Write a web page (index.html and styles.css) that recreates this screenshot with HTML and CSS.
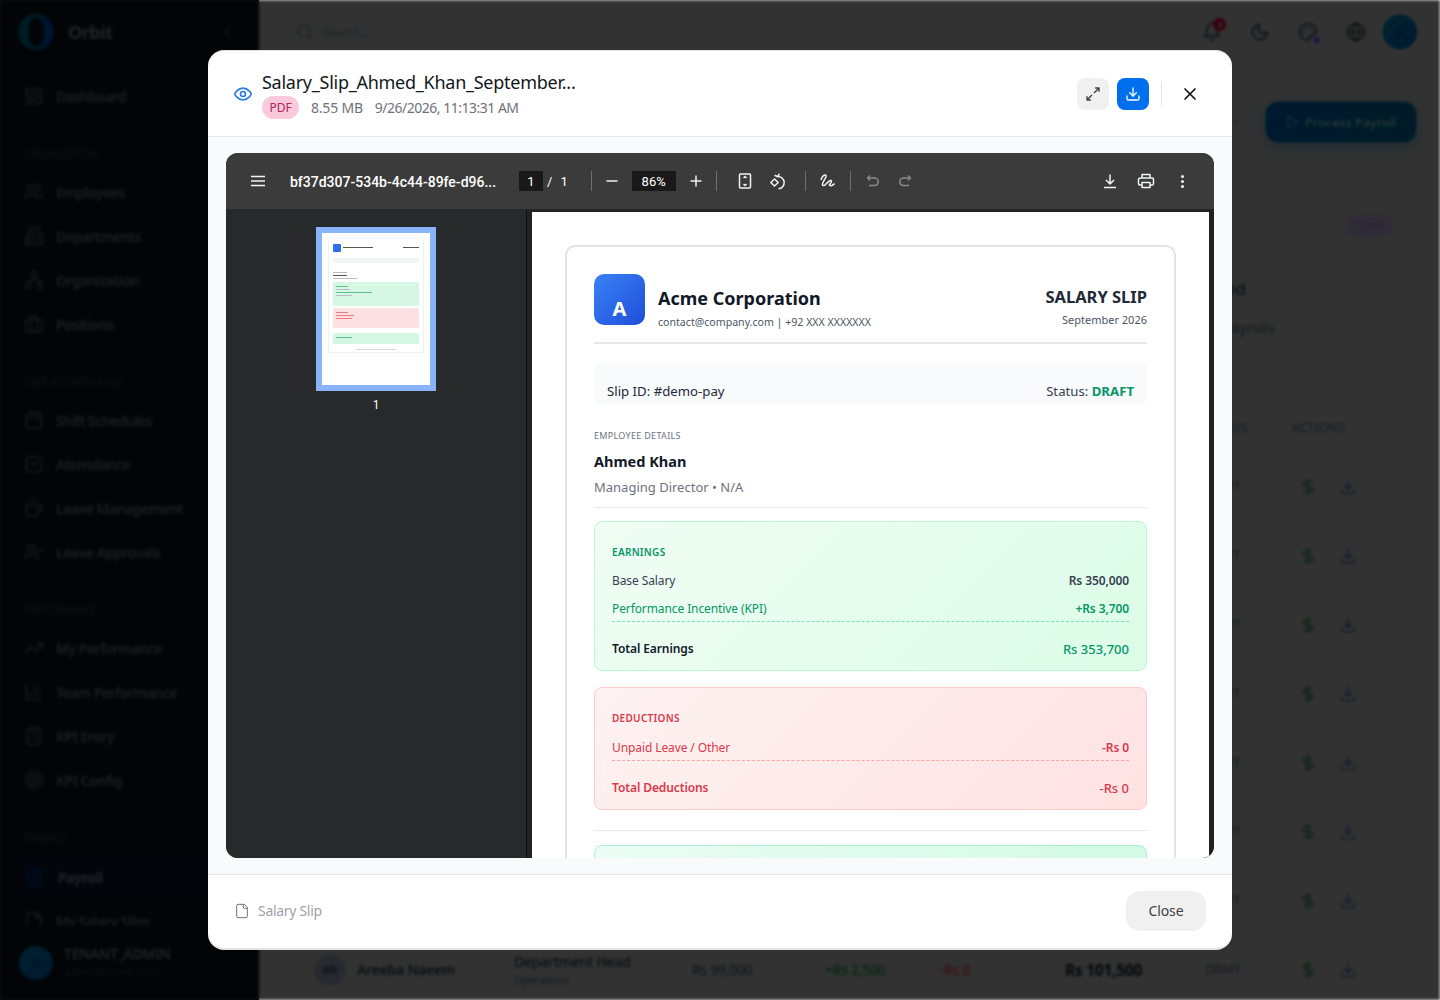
FILE: index.html
```html
<!DOCTYPE html>
<html lang="en">
<head>
  <meta charset="UTF-8" />
  <meta name="viewport" content="width=device-width, initial-scale=1.0" />
  <title>Orbit - Payroll</title>
  <link rel="stylesheet" href="styles.css">
</head>
<body>

  <svg class="defs" aria-hidden="true">
    <symbol id="i-download" viewBox="0 0 24 24"><path d="M21 15v4a2 2 0 0 1-2 2H5a2 2 0 0 1-2-2v-4"/><path d="M7 10l5 5 5-5"/><path d="M12 15V3"/></symbol>
    <symbol id="i-dollar" viewBox="0 0 24 24"><path d="M12 2v20"/><path d="M17 5H9.5a3.5 3.5 0 0 0 0 7h5a3.5 3.5 0 0 1 0 7H6"/></symbol>
  </svg>

  <div class="app">
    <aside class="sidebar">
      <div class="brand">
        <span class="brand-ring"></span>
        <span class="brand-name">Orbit</span>
        <svg class="ico brand-chevron" viewBox="0 0 24 24"><path d="M15 18l-6-6 6-6"/></svg>
      </div>
      <nav class="nav">
        <a class="nav-item"><svg class="ico" viewBox="0 0 24 24"><rect x="3" y="3" width="7" height="9" rx="1"/><rect x="14" y="3" width="7" height="5" rx="1"/><rect x="14" y="12" width="7" height="9" rx="1"/><rect x="3" y="16" width="7" height="5" rx="1"/></svg>Dashboard</a>
        <div class="nav-label">ORGANIZATION</div>
        <a class="nav-item"><svg class="ico" viewBox="0 0 24 24"><path d="M16 21v-2a4 4 0 0 0-4-4H6a4 4 0 0 0-4 4v2"/><circle cx="9" cy="7" r="4"/><path d="M22 21v-2a4 4 0 0 0-3-3.87"/><path d="M16 3.13a4 4 0 0 1 0 7.75"/></svg>Employees</a>
        <a class="nav-item"><svg class="ico" viewBox="0 0 24 24"><path d="M6 22V4a2 2 0 0 1 2-2h8a2 2 0 0 1 2 2v18Z"/><path d="M6 12H4a2 2 0 0 0-2 2v8h4"/><path d="M18 9h2a2 2 0 0 1 2 2v11h-4"/><path d="M10 6h4M10 10h4M10 14h4M10 18h4"/></svg>Departments</a>
        <a class="nav-item"><svg class="ico" viewBox="0 0 24 24"><rect x="16" y="16" width="6" height="6" rx="1"/><rect x="2" y="16" width="6" height="6" rx="1"/><rect x="9" y="2" width="6" height="6" rx="1"/><path d="M5 16v-3a1 1 0 0 1 1-1h12a1 1 0 0 1 1 1v3"/><path d="M12 12V8"/></svg>Organization</a>
        <a class="nav-item"><svg class="ico" viewBox="0 0 24 24"><rect x="2" y="7" width="20" height="14" rx="2"/><path d="M16 21V5a2 2 0 0 0-2-2h-4a2 2 0 0 0-2 2v16"/></svg>Positions</a>
        <div class="nav-label">TIME &amp; SCHEDULING</div>
        <a class="nav-item"><svg class="ico" viewBox="0 0 24 24"><rect x="3" y="4" width="18" height="18" rx="2"/><path d="M16 2v4M8 2v4M3 10h18"/></svg>Shift Schedules</a>
        <a class="nav-item"><svg class="ico" viewBox="0 0 24 24"><path d="M9 11l3 3L22 4"/><path d="M21 12v7a2 2 0 0 1-2 2H5a2 2 0 0 1-2-2V5a2 2 0 0 1 2-2h11"/></svg>Attendance</a>
        <a class="nav-item"><svg class="ico" viewBox="0 0 24 24"><path d="M10 2v2M14 2v2M6 2v2"/><path d="M16 8a1 1 0 0 1 1 1v8a4 4 0 0 1-4 4H7a4 4 0 0 1-4-4V9a1 1 0 0 1 1-1h14a4 4 0 1 1 0 8h-1"/></svg>Leave Management</a>
        <a class="nav-item"><svg class="ico" viewBox="0 0 24 24"><path d="M16 21v-2a4 4 0 0 0-4-4H6a4 4 0 0 0-4 4v2"/><circle cx="9" cy="7" r="4"/><path d="M16 11l2 2 4-4"/></svg>Leave Approvals</a>
        <div class="nav-label">PERFORMANCE</div>
        <a class="nav-item"><svg class="ico" viewBox="0 0 24 24"><path d="M22 7l-8.5 8.5-5-5L2 17"/><path d="M16 7h6v6"/></svg>My Performance</a>
        <a class="nav-item"><svg class="ico" viewBox="0 0 24 24"><path d="M3 3v18h18"/><path d="M18 17V9M13 17V5M8 17v-3"/></svg>Team Performance</a>
        <a class="nav-item"><svg class="ico" viewBox="0 0 24 24"><rect x="8" y="2" width="8" height="4" rx="1"/><path d="M16 4h2a2 2 0 0 1 2 2v14a2 2 0 0 1-2 2H6a2 2 0 0 1-2-2V6a2 2 0 0 1 2-2h2"/><path d="M12 11h4M12 16h4M8 11h.01M8 16h.01"/></svg>KPI Entry</a>
        <a class="nav-item"><svg class="ico" viewBox="0 0 24 24"><circle cx="12" cy="12" r="10"/><circle cx="12" cy="12" r="6"/><circle cx="12" cy="12" r="2"/></svg>KPI Config</a>
        <div class="nav-label">FINANCE</div>
        <a class="nav-item active"><svg class="ico" viewBox="0 0 24 24"><rect x="4" y="2" width="16" height="20" rx="2"/><path d="M8 6h8M8 12h8M8 17h8"/></svg>Payroll</a>
        <a class="nav-item"><svg class="ico" viewBox="0 0 24 24"><path d="M15 2H6a2 2 0 0 0-2 2v16a2 2 0 0 0 2 2h12a2 2 0 0 0 2-2V7Z"/><path d="M14 2v4a2 2 0 0 0 2 2h4"/></svg>My Salary Slips</a>
      </nav>
      <div class="user">
        <span class="avatar">A</span>
        <div>
          <div class="user-role">TENANT_ADMIN</div>
          <div class="user-mail">admin@acme.com</div>
        </div>
      </div>
    </aside>

    <main class="main">
      <header class="topbar">
        <div class="search">
          <svg class="ico" viewBox="0 0 24 24"><circle cx="11" cy="11" r="8"/><path d="M21 21l-4.3-4.3"/></svg>
          <span>Search...</span>
        </div>
        <div class="top-icons">
          <span class="bell">
            <svg class="ico" viewBox="0 0 24 24"><path d="M6 8a6 6 0 0 1 12 0c0 7 3 9 3 9H3s3-2 3-9"/><path d="M10.3 21a1.94 1.94 0 0 0 3.4 0"/></svg>
            <b class="badge">3</b>
          </span>
          <svg class="ico" viewBox="0 0 24 24"><path d="M12 3a6 6 0 0 0 9 9 9 9 0 1 1-9-9Z"/></svg>
          <span class="palette">
            <svg class="ico" viewBox="0 0 24 24"><circle cx="13.5" cy="6.5" r=".5"/><circle cx="17.5" cy="10.5" r=".5"/><circle cx="8.5" cy="7.5" r=".5"/><circle cx="6.5" cy="12.5" r=".5"/><path d="M12 2C6.5 2 2 6.5 2 12s4.500 10 10 10c.9 0 1.600-.7 1.600-1.600 0-.4-.2-.8-.4-1.100-.3-.3-.4-.7-.4-1.100 0-.9.7-1.600 1.600-1.600H16c3 0 6-2.500 6-5.500C22 6 17.500 2 12 2Z"/></svg>
            <i class="palette-dot"></i>
          </span>
          <svg class="ico" viewBox="0 0 24 24"><circle cx="12" cy="12" r="10"/><path d="M12 2a14.500 14.500 0 0 0 0 20 14.500 14.500 0 0 0 0-20"/><path d="M2 12h20"/></svg>
          <span class="avatar">A</span>
        </div>
      </header>

      <div class="content">
        <div class="page-head">
          <svg class="ico head-chevron" viewBox="0 0 24 24"><path d="M6 9l6 6 6-6"/></svg>
          <button class="process-btn">
            <svg class="ico" viewBox="0 0 24 24"><path d="M6 3l14 9-14 9V3Z"/></svg>
            Process Payroll
          </button>
        </div>

        <section class="stats">
          <div class="stat"></div>
          <div class="stat"></div>
          <div class="stat"></div>
          <div class="stat">
            <span class="stat-badge">Done</span>
            <div class="stat-name">Processed</div>
            <div class="stat-sub">Pending payrolls</div>
          </div>
        </section>

        <section class="pay-table">
          <div class="pay-row pay-head">
            <span>EMPLOYEE</span><span>ROLE</span><span>BASE</span><span>KPI</span><span>DEDUCTIONS</span><span>NET PAY</span><span>STATUS</span><span>ACTIONS</span>
          </div>
          <div class="pay-row"><span></span><span></span><span></span><span></span><span></span><span></span><span class="pay-status">DRAFT</span><span class="pay-actions"><svg class="ico green"><use href="#i-dollar"/></svg><svg class="ico blue"><use href="#i-download"/></svg></span></div>
          <div class="pay-row"><span></span><span></span><span></span><span></span><span></span><span></span><span class="pay-status">DRAFT</span><span class="pay-actions"><svg class="ico green"><use href="#i-dollar"/></svg><svg class="ico blue"><use href="#i-download"/></svg></span></div>
          <div class="pay-row"><span></span><span></span><span></span><span></span><span></span><span></span><span class="pay-status">DRAFT</span><span class="pay-actions"><svg class="ico green"><use href="#i-dollar"/></svg><svg class="ico blue"><use href="#i-download"/></svg></span></div>
          <div class="pay-row"><span></span><span></span><span></span><span></span><span></span><span></span><span class="pay-status">DRAFT</span><span class="pay-actions"><svg class="ico green"><use href="#i-dollar"/></svg><svg class="ico blue"><use href="#i-download"/></svg></span></div>
          <div class="pay-row"><span></span><span></span><span></span><span></span><span></span><span></span><span class="pay-status">DRAFT</span><span class="pay-actions"><svg class="ico green"><use href="#i-dollar"/></svg><svg class="ico blue"><use href="#i-download"/></svg></span></div>
          <div class="pay-row"><span></span><span></span><span></span><span></span><span></span><span></span><span class="pay-status">DRAFT</span><span class="pay-actions"><svg class="ico green"><use href="#i-dollar"/></svg><svg class="ico blue"><use href="#i-download"/></svg></span></div>
          <div class="pay-row"><span></span><span></span><span></span><span></span><span></span><span></span><span class="pay-status">DRAFT</span><span class="pay-actions"><svg class="ico green"><use href="#i-dollar"/></svg><svg class="ico blue"><use href="#i-download"/></svg></span></div>
          <div class="pay-row">
            <span class="pay-emp"><i class="pay-initials">AN</i>Areeba Naeem</span>
            <span class="pay-role">Department Head<small>Operations</small></span>
            <span>Rs 99,000</span>
            <span class="txt-green">+Rs 2,500</span>
            <span class="txt-red">-Rs 0</span>
            <span class="pay-net">Rs 101,500</span>
            <span class="pay-status">DRAFT</span>
            <span class="pay-actions"><svg class="ico green"><use href="#i-dollar"/></svg><svg class="ico blue"><use href="#i-download"/></svg></span>
          </div>
        </section>
      </div>
    </main>
  </div>

  <div class="overlay">
    <div class="modal">
      <header class="modal-head">
        <svg class="ico eye" viewBox="0 0 24 24"><path d="M2 12s3-7 10-7 10 7 10 7-3 7-10 7-10-7-10-7Z"/><circle cx="12" cy="12" r="3"/></svg>
        <div class="file-info">
          <div class="file-name">Salary_Slip_Ahmed_Khan_September...</div>
          <div class="file-meta">
            <span class="file-type">PDF</span>
            <span class="file-size">8.55 MB</span>
            <span class="file-date">9/26/2026, 11:13:31 AM</span>
          </div>
        </div>
        <div class="modal-actions">
          <button class="icon-btn"><svg class="ico" viewBox="0 0 24 24"><path d="M21 3l-7 7M3 21l7-7M16 3h5v5M3 16v5h5"/></svg></button>
          <button class="icon-btn primary"><svg class="ico"><use href="#i-download"/></svg></button>
          <span class="vline"></span>
          <button class="close-x"><svg class="ico" viewBox="0 0 24 24"><path d="M18 6L6 18M6 6l12 12"/></svg></button>
        </div>
      </header>

      <div class="modal-body">
        <div class="viewer">
          <div class="toolbar">
            <svg class="tb-ico hamburger" viewBox="0 0 16 16"><path d="M1 3.500h14M1 8h14M1 12.500h14"/></svg>
            <span class="doc-title">bf37d307-534b-4c44-89fe-d96...</span>
            <span class="page-input">1</span>
            <span class="page-of">/</span>
            <span class="page-total">1</span>
            <span class="tb-sep sep-a"></span>
            <svg class="tb-ico zoom-out" viewBox="0 0 16 16"><path d="M2.500 8h11"/></svg>
            <span class="zoom-input">86%</span>
            <svg class="tb-ico zoom-in" viewBox="0 0 16 16"><path d="M2.500 8h11M8 2.500v11"/></svg>
            <span class="tb-sep sep-b"></span>
            <svg class="tb-ico fit" viewBox="0 0 16 16"><rect x="2.500" y="1" width="11" height="14" rx="1"/><path d="M6.500 5L8 3.500 9.500 5M6.500 11L8 12.500 9.500 11" /></svg>
            <svg class="tb-ico rotate" viewBox="0 0 18 18"><path d="M6 2.500L8.500 5 11 2.500" transform="rotate(-20 8 4)"/><path d="M8.500 4.500a6 6 0 1 1 1 12.300"/><path d="M5.500 7L1.800 10.500 5.500 14l3.700-3.500Z"/></svg>
            <span class="tb-sep sep-c"></span>
            <svg class="tb-ico draw" viewBox="0 0 18 18"><path d="M2 8c1-4 4-6 5-4.500S4 9 3.500 12c-.3 2 1.500 2 3 .5S12 7 12.500 9s-3.500 4-1.500 4.500 3.500-.5 4.500-2"/></svg>
            <span class="tb-sep sep-d"></span>
            <svg class="tb-ico undo off" viewBox="0 0 16 16"><path d="M5 2.500L2.500 5 5 7.500"/><path d="M3 5h6.500a3.500 3.500 0 0 1 0 7.500H4"/></svg>
            <svg class="tb-ico redo off" viewBox="0 0 16 16"><path d="M11 2.500L13.500 5 11 7.500"/><path d="M13 5H6.500a3.500 3.500 0 0 0 0 7.500H12"/></svg>
            <span class="tb-spacer"></span>
            <svg class="tb-ico save" viewBox="0 0 16 16"><path d="M8 1.500v9M4 7l4 4 4-4M2 14.500h12"/></svg>
            <svg class="tb-ico print" viewBox="0 0 18 18"><path d="M5 6V2.500h8V6"/><path d="M5 13H3a1.500 1.500 0 0 1-1.500-1.500V7.500A1.500 1.500 0 0 1 3 6h12a1.500 1.500 0 0 1 1.500 1.500v4A1.500 1.500 0 0 1 15 13h-2"/><rect x="5" y="10.500" width="8" height="5"/></svg>
            <span class="kebab"><i></i><i></i><i></i></span>
          </div>

          <div class="viewer-panes">
            <div class="thumbs">
              <div class="thumb">
                <div class="mini-card">
                  <div class="mini-top"><i class="mini-logo"></i><i class="bar dark w30"></i><i class="bar dark w16 right"></i></div>
                  <div class="mini-strip"></div>
                  <i class="bar w14"></i>
                  <i class="bar dark w14"></i>
                  <i class="bar w24"></i>
                  <div class="mini-box mini-green"><i class="bar g w12"></i><i class="bar w14"></i><i class="bar g w36"></i><i class="bar w16"></i></div>
                  <div class="mini-box mini-red"><i class="bar r w12"></i><i class="bar r w18"></i><i class="bar r w16"></i></div>
                  <div class="mini-box mini-net"><i class="bar g w16"></i></div>
                  <i class="bar foot"></i>
                </div>
              </div>
              <span class="thumb-num">1</span>
            </div>

            <div class="page-area">
              <div class="page">
                <div class="slip">
                  <div class="slip-head">
                    <div class="slip-logo">A</div>
                    <div class="slip-company">
                      <div class="slip-co-name">Acme Corporation</div>
                      <div class="slip-co-mail">contact@company.com | +92 XXX XXXXXXX</div>
                    </div>
                    <div class="slip-title">
                      <div class="slip-title-big">SALARY SLIP</div>
                      <div class="slip-title-month">September 2026</div>
                    </div>
                  </div>

                  <div class="slip-id">
                    <span>Slip ID: #demo-pay</span>
                    <span class="slip-state">Status: <b>DRAFT</b></span>
                  </div>

                  <div class="emp">
                    <div class="emp-label">EMPLOYEE DETAILS</div>
                    <div class="emp-name">Ahmed Khan</div>
                    <div class="emp-role">Managing Director • N/A</div>
                  </div>

                  <div class="pay-box earn">
                    <div class="box-label">EARNINGS</div>
                    <div class="box-row"><span>Base Salary</span><b>Rs 350,000</b></div>
                    <div class="box-row dash"><span>Performance Incentive (KPI)</span><b>+Rs 3,700</b></div>
                    <div class="box-total"><span>Total Earnings</span><b>Rs 353,700</b></div>
                  </div>

                  <div class="pay-box ded">
                    <div class="box-label">DEDUCTIONS</div>
                    <div class="box-row dash"><span>Unpaid Leave / Other</span><b>-Rs 0</b></div>
                    <div class="box-total"><span>Total Deductions</span><b>-Rs 0</b></div>
                  </div>

                  <div class="slip-rule"></div>
                  <div class="pay-box net"></div>
                </div>
              </div>
            </div>
          </div>
        </div>
      </div>

      <footer class="modal-foot">
        <span class="foot-label">
          <svg class="ico" viewBox="0 0 24 24"><path d="M15 2H6a2 2 0 0 0-2 2v16a2 2 0 0 0 2 2h12a2 2 0 0 0 2-2V7Z"/><path d="M14 2v4a2 2 0 0 0 2 2h4"/></svg>
          Salary Slip
        </span>
        <button class="close-btn">Close</button>
      </footer>
    </div>
  </div>

</body>
</html>
```

FILE: styles.css
```css
* {
  box-sizing: border-box;
}
html, body {
  margin: 0;
  height: 100%;
  overflow: hidden;
}
body {
  font-family: "Noto Sans", "Open Sans", Arial, sans-serif;
  color: #111827;
  background: #fafafa;
}
.defs {
  position: absolute;
  width: 0;
  height: 0;
}
.ico {
  width: 20px;
  height: 20px;
  fill: none;
  stroke: currentColor;
  stroke-width: 2;
  stroke-linecap: round;
  stroke-linejoin: round;
  flex: none;
}
button {
  font-family: inherit;
  border: none;
  cursor: pointer;
}

/* page behind the dialog */
.app {
  display: flex;
  height: 100vh;
  overflow: hidden;
}
.sidebar {
  width: 259px;
  flex: none;
  background: #0f1419;
  color: #64748b;
  display: flex;
  flex-direction: column;
}
.brand {
  height: 64px;
  flex: none;
  display: flex;
  align-items: center;
  padding: 0 24px 0 18px;
}
.brand-ring {
  width: 36px;
  height: 36px;
  border-radius: 50%;
  border-style: solid;
  border-width: 3px 10px;
  border-color: #0e7490 #1e5a9e #0e6f8f #0e7490;
  background: #0f1419;
}
.brand-name {
  margin-left: 14px;
  font-size: 18px;
  font-weight: 700;
  letter-spacing: -.5px;
  color: #a3a9b0;
}
.brand-chevron {
  margin-left: auto;
  width: 16px;
  height: 16px;
}
.nav {
  flex: 1;
  min-height: 0;
  overflow: hidden;
  padding-top: 10px;
}
.nav-item {
  height: 44px;
  display: flex;
  align-items: center;
  gap: 12px;
  padding-left: 24px;
  font-size: 14px;
  font-weight: 600;
  letter-spacing: -.5px;
  color: #8a9098;
}
.nav-item .ico {
  width: 20px;
  height: 20px;
  stroke-width: 1.500;
}
.nav-item.active {
  margin: 3px 0 2px 16px;
  padding-left: 9px;
  width: 226px;
  height: 40px;
  gap: 13px;
  border-radius: 8px;
  background: #0f1724;
  color: #a3a9b0;
  font-weight: 700;
}
.nav-item.active .ico {
  color: #1e4fb0;
}
.nav-label {
  height: 52px;
  padding: 29px 0 0 24px;
  font-size: 10px;
  line-height: 14px;
  color: #4e5560;
}
.user {
  height: 75px;
  flex: none;
  display: flex;
  align-items: center;
  gap: 11px;
  padding: 0 0 0 19px;
  background: #0f1419;
}
.avatar {
  width: 34px;
  height: 34px;
  border-radius: 50%;
  background: linear-gradient(135deg, #0891b2, #0369a1);
  display: flex;
  align-items: center;
  justify-content: center;
  font-size: 12px;
  color: #0f3f5f;
  flex: none;
}
.user-role {
  font-size: 14px;
  font-weight: 600;
  line-height: 18px;
  letter-spacing: -.3px;
  color: #a3a9b0;
}
.user-mail {
  font-size: 11px;
  line-height: 17px;
  color: #475569;
}
.main {
  flex: 1;
  min-width: 0;
  background: #fafafa;
  color: #1f2937;
}
.topbar {
  height: 64px;
  display: flex;
  align-items: center;
  justify-content: space-between;
  padding: 0 23px 0 37px;
}
.search {
  display: flex;
  align-items: center;
  gap: 9px;
  width: 240px;
  font-size: 12px;
  color: #94a3b8;
}
.search .ico {
  width: 18px;
  height: 18px;
}
.top-icons {
  display: flex;
  align-items: center;
  gap: 28px;
  color: #111827;
}
.top-icons .ico {
  stroke-width: 1.500;
}
.top-icons .avatar {
  margin-left: -11px;
}
.bell,
.palette {
  position: relative;
  display: flex;
}
.badge {
  position: absolute;
  top: -4px;
  right: -4px;
  width: 13px;
  height: 13px;
  border-radius: 50%;
  background: #9f1239;
  color: #fff;
  font-size: 9px;
  line-height: 13px;
  text-align: center;
}
.palette-dot {
  position: absolute;
  right: -2px;
  bottom: -1px;
  width: 6px;
  height: 6px;
  border-radius: 50%;
  background: #6366f1;
}
.content {
  padding: 38px 24px 0;
}
.page-head {
  height: 40px;
  display: flex;
  align-items: center;
  justify-content: flex-end;
}
.head-chevron {
  margin-right: 25px;
  width: 12px;
  height: 12px;
  stroke-width: 1.500;
}
.process-btn {
  width: 150px;
  height: 40px;
  border-radius: 12px;
  background: linear-gradient(90deg, #0369a1, #0e7490);
  box-shadow: 0 4px 14px rgba(3, 105, 161, .35);
  color: #fff;
  font-size: 13px;
  font-weight: 600;
  letter-spacing: -.25px;
  white-space: nowrap;
  display: flex;
  align-items: center;
  gap: 5px;
  padding-left: 18px;
}
.process-btn .ico {
  width: 16px;
  height: 16px;
}
.stats {
  margin-top: 48px;
  height: 160px;
  display: grid;
  grid-template-columns: repeat(4, 1fr);
  gap: 16px;
}
.stat {
  padding: 20px;
  position: relative;
}
.stat-badge {
  position: absolute;
  top: 25px;
  right: 24px;
  padding: 0 8px;
  height: 22px;
  border-radius: 8px;
  background: #c4b5fd;
  color: #4c1d95;
  font-size: 12px;
  line-height: 22px;
  opacity: .35;
}
.stat-name {
  margin-top: 67px;
  font-size: 17px;
  line-height: 24px;
}
.stat-sub {
  margin-top: 17px;
  font-size: 14px;
  line-height: 20px;
  color: #64748b;
}
.pay-table {
  margin-top: 52px;
}
.pay-row {
  height: 69px;
  display: grid;
  grid-template-columns: 200px 178px 133px 115px 125px 140px 87px 1fr;
  align-items: center;
  padding-left: 31px;
  font-size: 14px;
  letter-spacing: -.25px;
  color: #4b5563;
}
.pay-head {
  height: 50px;
  font-size: 12px;
  letter-spacing: .3px;
  color: #64748b;
}
.pay-emp {
  display: flex;
  align-items: center;
  gap: 11px;
  font-weight: 600;
  color: #374151;
}
.pay-initials {
  width: 32px;
  height: 32px;
  border-radius: 50%;
  background: #cbd5e1;
  font-style: normal;
  font-size: 11px;
  line-height: 32px;
  text-align: center;
}
.pay-role {
  font-weight: 500;
  color: #374151;
}
.pay-role small {
  display: block;
  margin-top: 1px;
  font-size: 11px;
  font-weight: 400;
  color: #64748b;
}
.txt-green {
  color: #2a8a52;
}
.txt-red {
  color: #c2304f;
}
.pay-net {
  font-size: 15.500px;
  font-weight: 700;
  color: #111827;
}
.pay-status {
  font-size: 12px;
  color: #64748b;
}
.pay-actions {
  display: flex;
  gap: 22px;
  padding-left: 7px;
}
.pay-actions .ico {
  width: 18px;
  height: 18px;
  stroke-width: 1.500;
}
.pay-actions .green {
  color: #2a7a4c;
}
.pay-actions .blue {
  color: #47699a;
}

/* dialog */
.overlay {
  position: fixed;
  inset: -8px;
  display: flex;
  align-items: center;
  justify-content: center;
  backdrop-filter: blur(1.5px) brightness(.2) saturate(2);
}
.modal {
  width: 1024px;
  height: 900px;
  background: #fff;
  border-radius: 16px;
  border-top: 1px solid #e4e4e4;
  border-bottom: 2px solid #e4e4e4;
  display: flex;
  flex-direction: column;
  overflow: hidden;
}
.modal-head {
  height: 86px;
  flex: none;
  display: flex;
  align-items: center;
  padding: 0 26px 0 25px;
  border-bottom: 1px solid #e5e7eb;
}
.eye {
  color: #2b7be4;
  width: 20px;
  height: 20px;
  margin-top: 1px;
}
.file-info {
  margin-left: 9px;
}
.file-name {
  font-size: 18px;
  line-height: 26px;
  letter-spacing: -.26px;
  color: #11181c;
}
.file-meta {
  display: flex;
  align-items: center;
  gap: 12px;
  height: 23px;
  margin-top: 1px;
  font-size: 14px;
  color: #71717a;
}
.file-size {
  letter-spacing: -.2px;
}
.file-date {
  letter-spacing: -.5px;
}
.file-type {
  width: 37px;
  height: 23px;
  border-radius: 12px;
  background: #fbc9dc;
  color: #b0245f;
  font-size: 12px;
  line-height: 23px;
  text-align: center;
}
.modal-actions {
  margin-left: auto;
  display: flex;
  align-items: center;
  gap: 8px;
}
.icon-btn {
  width: 32px;
  height: 32px;
  border-radius: 8px;
  background: #f0f0f0;
  color: #3f3f46;
  display: flex;
  align-items: center;
  justify-content: center;
  padding: 0;
}
.icon-btn .ico {
  width: 16px;
  height: 16px;
}
.icon-btn.primary {
  background: #006fee;
  color: #fff;
}
.vline {
  width: 1px;
  height: 24px;
  margin: 0 4px;
  background: #e4e4e7;
}
.close-x {
  width: 32px;
  height: 32px;
  padding: 0;
  background: none;
  color: #111;
  display: flex;
  align-items: center;
  justify-content: center;
}
.modal-body {
  flex: 1;
  min-height: 0;
  background: #f8fafc;
  padding: 16px 18px;
}
.viewer {
  height: 100%;
  border-radius: 12px;
  overflow: hidden;
  display: flex;
  flex-direction: column;
  background: #28292a;
  font-family: Roboto, Arial, sans-serif;
}
.toolbar {
  height: 56px;
  flex: none;
  background: #3b3b3b;
  display: flex;
  align-items: center;
  color: #fff;
  font-size: 13px;
}
.tb-ico {
  flex: none;
  width: 16px;
  height: 16px;
  fill: none;
  stroke: #f1f3f4;
  stroke-width: 1.500;
  stroke-linejoin: round;
}
.tb-ico.off {
  stroke: #8a8a8a;
}
.hamburger {
  margin-left: 24px;
}
.doc-title {
  margin-left: 24px;
  margin-top: 1px;
  width: 229px;
  font-weight: 500;
  font-size: 14px;
  white-space: nowrap;
}
.page-input {
  width: 24px;
  height: 20px;
  background: #191919;
  text-align: center;
  line-height: 21px;
}
.page-of {
  margin-left: 4px;
  margin-top: 1px;
}
.page-total {
  margin-left: 8px;
  margin-top: 1px;
}
.tb-sep {
  width: 1px;
  height: 20px;
  background: #6f6f6f;
  flex: none;
}
.sep-a {
  margin-left: 23px;
}
.zoom-out {
  margin-left: 12px;
}
.zoom-input {
  margin-left: 12px;
  width: 44px;
  height: 20px;
  background: #191919;
  text-align: center;
  line-height: 21px;
}
.zoom-in {
  margin-left: 12px;
}
.sep-b {
  margin-left: 12px;
}
.fit {
  margin-left: 20px;
}
.rotate {
  margin-left: 16px;
  width: 18px;
  height: 18px;
}
.sep-c {
  margin-left: 18px;
}
.draw {
  margin-left: 13px;
  width: 18px;
  height: 18px;
}
.sep-d {
  margin-left: 13px;
}
.undo {
  margin-left: 14px;
}
.redo {
  margin-left: 16px;
}
.tb-spacer {
  flex: 1;
}
.print {
  margin-left: 19px;
  width: 18px;
  height: 18px;
}
.kebab {
  margin: 0 30px 0 26px;
  display: flex;
  flex-direction: column;
  gap: 2px;
}
.kebab i {
  width: 3px;
  height: 3px;
  border-radius: 50%;
  background: #f1f3f4;
}
.viewer-panes {
  flex: 1;
  min-height: 0;
  display: flex;
  border-top: 3px solid #232323;
}
.thumbs {
  width: 301px;
  flex: none;
  margin-top: -3px;
  padding-top: 18px;
  background: #28292a;
  border-right: 1px solid #111;
  display: flex;
  flex-direction: column;
  align-items: center;
  color: #fff;
  font-size: 12px;
}
.thumb {
  width: 120px;
  height: 164px;
  border: 6px solid #8ab4f8;
  background: #fff;
  padding: 5px 6px;
}
.mini-card {
  height: 115px;
  border: 1px solid #eef0f2;
  border-radius: 2px;
  padding: 4px;
  filter: blur(.4px);
}
.mini-top {
  display: flex;
  align-items: center;
  gap: 2px;
  height: 9px;
  margin-bottom: 6px;
}
.mini-logo {
  width: 8px;
  height: 8px;
  border-radius: 1px;
  background: #2f6fe6;
}
.bar {
  display: block;
  height: 1px;
  margin: 2px 0;
  background: #b8bcc2;
}
.bar.dark {
  background: #555;
}
.bar.g {
  background: #5cc28f;
}
.bar.r {
  background: #ea7c86;
}
.bar.right {
  margin-left: auto;
}
.w12 { width: 12px; }
.w14 { width: 14px; }
.w16 { width: 16px; }
.w18 { width: 18px; }
.w24 { width: 24px; }
.w30 { width: 30px; }
.w36 { width: 36px; }
.mini-strip {
  height: 5px;
  margin: 2px 0 9px;
  background: #f1f3f5;
}
.mini-box {
  border-radius: 1px;
  padding: 2px 3px;
  margin-top: 2px;
}
.mini-green {
  height: 24px;
  margin-top: 3px;
  background: #d6f7e3;
}
.mini-red {
  height: 20px;
  background: #fde0e2;
}
.mini-net {
  height: 11px;
  margin-top: 5px;
  background: #d3f7e4;
}
.bar.foot {
  width: 40px;
  margin: 5px auto 0;
  background: #d5d7da;
}
.thumb-num {
  margin-top: 7px;
  line-height: 14px;
}
.page-area {
  flex: 1;
  min-width: 0;
  padding: 0 5px 0 5px;
  background: #202122;
}
.page {
  height: 100%;
  background: #fff;
  padding: 33px 33px 0;
  overflow: hidden;
  font-family: "Noto Sans", "Open Sans", Arial, sans-serif;
  color: #374151;
}
.slip {
  border: 2px solid #dfe3e8;
  border-radius: 10px;
  padding: 27px 27px 0;
}
.slip-head {
  display: flex;
  align-items: flex-start;
  height: 70px;
  border-bottom: 2px solid #e5e7eb;
}
.slip-logo {
  width: 51px;
  height: 51px;
  border-radius: 10px;
  background: linear-gradient(135deg, #3b82f6, #1d4ed8);
  color: #fff;
  font-size: 20px;
  font-weight: 700;
  text-align: center;
  line-height: 70px;
  overflow: hidden;
}
.slip-company {
  margin-left: 13px;
  flex: 1;
}
.slip-co-name {
  margin-top: 11px;
  font-size: 18px;
  font-weight: 700;
  line-height: 27px;
  color: #111827;
}
.slip-co-mail {
  margin-top: 2px;
  font-size: 10.600px;
  line-height: 16px;
  color: #4b5563;
}
.slip-title {
  text-align: right;
}
.slip-title-big {
  margin-top: 11px;
  font-size: 16.500px;
  font-weight: 700;
  line-height: 24px;
  color: #1f2937;
}
.slip-title-month {
  margin-top: 3px;
  font-size: 11px;
  line-height: 16px;
  color: #4b5563;
}
.slip-id {
  margin-top: 19px;
  height: 41px;
  padding: 19px 13px 0;
  border-radius: 6px;
  background: #f8fafc;
  display: flex;
  justify-content: space-between;
  font-size: 13.200px;
  line-height: 18px;
  color: #1f2937;
}
.slip-state {
  color: #374151;
}
.slip-state b {
  color: #059669;
}
.emp {
  height: 104px;
  padding-top: 25px;
  border-bottom: 1px solid #e5e7eb;
}
.emp-label {
  font-size: 9px;
  letter-spacing: .3px;
  line-height: 13px;
  color: #6b7280;
}
.emp-name {
  margin-top: 9px;
  font-size: 14.500px;
  font-weight: 700;
  line-height: 20px;
  color: #111827;
}
.emp-role {
  margin-top: 6px;
  font-size: 13px;
  line-height: 20px;
  color: #6b7280;
}
.pay-box {
  border-radius: 8px;
  padding: 0 17px;
  font-size: 12px;
  letter-spacing: -.1px;
}
.pay-box b {
  font-weight: 600;
}
.earn {
  margin-top: 13px;
  height: 150px;
  background: linear-gradient(135deg, #f0fdf4, #dcfce7);
  border: 1px solid #bbf7d0;
}
.ded {
  margin-top: 16px;
  height: 123px;
  background: linear-gradient(135deg, #fef2f2, #fee2e2);
  border: 1px solid #fecaca;
  color: #d9394a;
}
.net {
  margin-top: 14px;
  height: 40px;
  background: linear-gradient(135deg, #ecfdf5, #d1fae5);
  border: 1px solid #a7f3d0;
}
.box-label {
  padding-top: 23px;
  font-size: 10px;
  font-weight: 600;
  letter-spacing: .3px;
  line-height: 15px;
  color: #059669;
}
.ded .box-label {
  color: #d9394a;
}
.box-row {
  margin-top: 12px;
  height: 18px;
  line-height: 18px;
  display: flex;
  justify-content: space-between;
}
.ded .box-row {
  margin-top: 13px;
}
.box-row + .box-row {
  margin-top: 10px;
}
.box-row.dash {
  height: 22px;
  border-bottom: 1px dashed #6ee7b7;
  color: #059669;
}
.ded .box-row.dash {
  color: #d9394a;
  border-bottom-color: #fca5a5;
}
.box-total {
  margin-top: 18px;
  line-height: 18px;
  display: flex;
  justify-content: space-between;
  font-weight: 600;
  color: #111827;
}
.box-total b {
  font-size: 13px;
  font-weight: 500;
  letter-spacing: 0;
  color: #059669;
}
.ded .box-total,
.ded .box-total b {
  color: #d9394a;
}
.slip-rule {
  margin-top: 20px;
  height: 1px;
  background: #e5e7eb;
}
.modal-foot {
  flex: none;
  height: 74px;
  display: flex;
  align-items: center;
  justify-content: space-between;
  padding: 0 26px 2px 26px;
  border-top: 1px solid #e5e7eb;
}
.foot-label {
  display: flex;
  align-items: center;
  gap: 8px;
  font-size: 14px;
  letter-spacing: -.3px;
  color: #a1a1aa;
}
.foot-label .ico {
  width: 16px;
  height: 16px;
  stroke-width: 1.500;
  color: #71717a;
}
.close-btn {
  width: 80px;
  height: 40px;
  border-radius: 14px;
  background: #f0f0f0;
  color: #3f3f46;
  font-size: 14px;
  letter-spacing: -.1px;
}
```
